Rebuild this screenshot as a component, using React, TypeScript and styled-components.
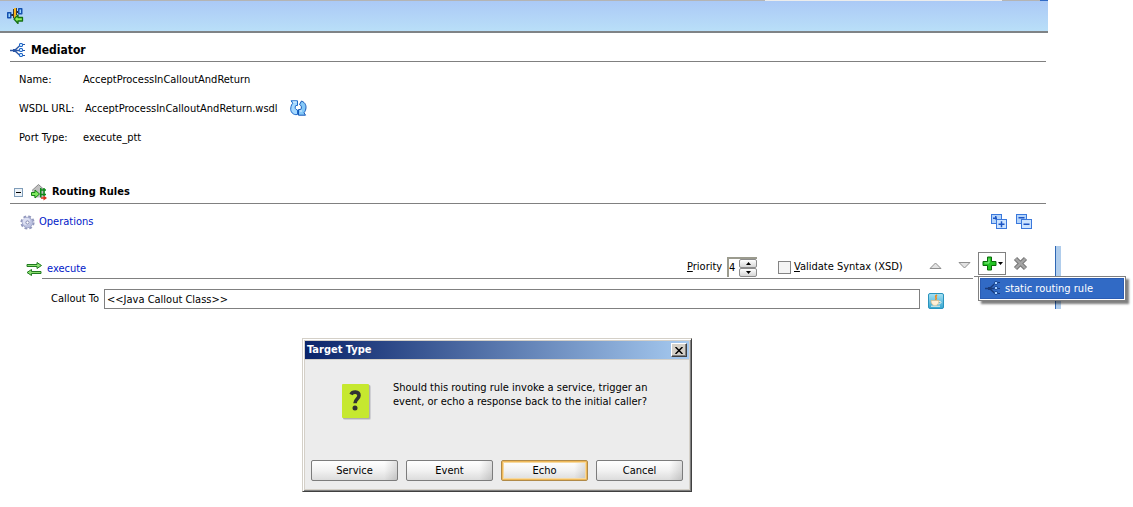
import React from "react";
import styled, { createGlobalStyle } from "styled-components";

const GlobalStyle = createGlobalStyle`
  * { box-sizing: border-box; }
  body {
    margin: 0;
    background: #fff;
    color: #000;
    font-family: "DejaVu Sans Condensed", "Noto Sans", sans-serif;
    font-size: 11px;
    line-height: 14px;
  }
  button, input {
    font: inherit;
    color: inherit;
    margin: 0;
    padding: 0;
    border-radius: 0;
  }
  svg { display: block; flex: none; }
`;

const Page = styled.div`
  padding-bottom: 15px;
`;

const WindowEdge = styled.div`
  display: flex;
  justify-content: flex-end;
  height: 1px;
  margin-right: 85px;
  background: #b4b4b4;
`;

const EdgePiece = styled.span<{ $width: number; $gap: number; $color: string }>`
  width: ${(p) => p.$width}px;
  margin-right: ${(p) => p.$gap}px;
  background: ${(p) => p.$color};
`;

const Toolbar = styled.header`
  height: 32px;
  margin-right: 85px;
  padding: 6px 7px;
  background: linear-gradient(#abc9f6, #b9dff8);
  border-bottom: 2px solid #7f8386;
`;

const IconButton = styled.button`
  display: flex;
  border: 0;
  background: none;
`;

const SectionHead = styled.div<{ $indent: number; $gap: number }>`
  display: flex;
  align-items: center;
  gap: ${(p) => p.$gap}px;
  height: 29px;
  margin: 0 87px 0 10px;
  padding: 6px 0 0 ${(p) => p.$indent}px;
  border-bottom: 1px solid #808080;
`;

const Title = styled.h1`
  margin: 0;
  font-size: 12px;
  line-height: 14px;
`;

const Subtitle = styled.h2`
  margin: 0;
  font-size: 11px;
  line-height: 14px;
`;

const Details = styled.dl`
  margin: 3px 0 23px 19px;
`;

const DetailRow = styled.div`
  display: flex;
  align-items: center;
  height: 29px;
`;

const DetailName = styled.dt`
  width: 64px;
  white-space: nowrap;
`;

const DetailValue = styled.dd<{ $inset?: boolean }>`
  display: flex;
  align-items: center;
  gap: 12px;
  margin: 0;
  padding-left: ${(p) => (p.$inset ? 2 : 0)}px;
`;

const OperationsBar = styled.div`
  display: flex;
  align-items: center;
  height: 36px;
  margin: 0 101px 6px 20px;
`;

const BarLink = styled.a`
  display: flex;
  align-items: center;
  gap: 4px;
  margin-right: auto;
  color: #0018c8;
  text-decoration: none;
`;

const StackButtons = styled.div`
  display: flex;
  gap: 9px;
`;

const CollapseButton = styled(IconButton)`
  margin-right: 4px;
`;

const RuleArea = styled.section`
  display: flex;
  margin-right: 72px;
`;

const RuleBody = styled.div`
  flex: 1;
`;

const ScrollTrack = styled.div`
  width: 6px;
  background: #b0cdec;
  border-left: 1px solid #2f67b4;
`;

const RuleHead = styled.div`
  display: flex;
  align-items: flex-end;
  height: 32px;
  padding: 0 27px 0 26px;
`;

const RuleLine = styled.hr`
  height: 1px;
  margin: 0 82px 0 42px;
  border: 0;
  background: #808080;
`;

const RuleLink = styled(BarLink)`
  gap: 5px;
  height: 18px;
`;

const Fields = styled.div`
  display: flex;
  align-items: center;
  height: 22px;
`;

const PriorityLabel = styled.label`
  width: 40px;
  white-space: nowrap;
`;

const Spinner = styled.div`
  display: flex;
  width: 30px;
  height: 20px;
  margin-right: 21px;
  border-top: 2px solid #9b9b8e;
  border-left: 2px solid #9b9b8e;
`;

const SpinnerInput = styled.input`
  width: 10px;
  border: 0;
  outline: 0;
`;

const SpinnerButtons = styled.div`
  display: flex;
  flex-direction: column;
  flex: 1;
`;

const StepButton = styled.button`
  display: flex;
  align-items: center;
  justify-content: center;
  height: 9px;
  border: 1px solid #8c8c8c;
  border-radius: 2px;
  background: linear-gradient(#fff, #d6d6d6);
`;

const CheckLabel = styled.label`
  display: flex;
  align-items: center;
  gap: 3px;
  width: 151px;
  white-space: nowrap;
`;

const CheckBox = styled.input`
  appearance: none;
  width: 13px;
  height: 13px;
  border: 1px solid #848484;
  background: #f4f4f4;
`;

const RuleTools = styled.div`
  display: flex;
  align-items: center;
  height: 23px;
  margin-bottom: 3px;
`;

const MoveButtons = styled.div`
  display: flex;
  gap: 16px;
  margin: 4px 7px 0 0;
`;

const AddHolder = styled.div`
  position: relative;
  margin-right: 7px;
`;

const AddButton = styled.button`
  display: flex;
  align-items: center;
  gap: 1px;
  width: 28px;
  height: 23px;
  padding-left: 3px;
  border: 1px solid #808080;
  background: #fff;
`;

const Menu = styled.div`
  position: absolute;
  top: 24px;
  left: 0;
  width: 148px;
  padding: 1px;
  border: 1px solid #808080;
  background: #fff;
  box-shadow: 3px 3px 2px rgba(0, 0, 0, 0.5);

  &::before {
    content: "";
    position: absolute;
    top: -1px;
    left: -5px;
    width: 5px;
    height: 1px;
    background: #808080;
  }
`;

const MenuItem = styled.button`
  display: flex;
  align-items: center;
  gap: 4px;
  width: 100%;
  height: 21px;
  padding-left: 4px;
  border: 1px solid #2a5cb4;
  background: #316ac5;
  color: #fff;
  white-space: nowrap;
`;

const CalloutRow = styled.div`
  display: flex;
  align-items: center;
  margin-top: 10px;
  padding: 0 111px 0 51px;
`;

const CalloutLabel = styled.label`
  width: 53px;
  white-space: nowrap;
`;

const CalloutInput = styled.input`
  flex: 1;
  height: 20px;
  margin-right: 8px;
  padding: 0 2px;
  border: 1px solid #808080;
  outline: 0;
`;

const CalloutButton = styled(IconButton)`
  padding-top: 3px;
`;

const Dialog = styled.div`
  width: 390px;
  margin: 29px 0 0 302px;
  padding: 1px;
  border: 1px solid;
  border-color: #d4d0c8 #404040 #404040 #d4d0c8;
  background: #d4d0c8;
  box-shadow: inset 1px 1px 0 #fff, inset -1px -1px 0 #808080;
`;

const DialogTitle = styled.div`
  display: flex;
  align-items: center;
  justify-content: space-between;
  height: 18px;
  margin: 1px;
  padding: 0 2px;
  background: linear-gradient(to right, #0a246a, #a6caf0);
  color: #fff;
  font-weight: bold;
`;

const CloseButton = styled.button`
  display: flex;
  align-items: center;
  justify-content: center;
  width: 16px;
  height: 14px;
  border: 1px solid;
  border-color: #fff #404040 #404040 #fff;
  background: #d4d0c8;
  box-shadow: inset -1px -1px 0 #808080;
`;

const DialogBody = styled.div`
  margin: 1px;
  padding: 21px 6px 8px;
  background: #ececec;
`;

const Message = styled.div`
  display: flex;
  gap: 22px;
  height: 79px;
  padding-left: 31px;
`;

const MessageText = styled.p`
  margin: 0;
  white-space: pre;
`;

const QuestionMark = styled.div`
  padding-top: 3px;
`;

const Choices = styled.div`
  display: flex;
  gap: 8px;
`;

const Choice = styled.button<{ $focused?: boolean }>`
  width: 87px;
  height: 21px;
  border: 1px solid #7c7c7c;
  border-radius: 2px;
  background: linear-gradient(to right, transparent 85%, rgba(0, 0, 0, 0.12)),
    linear-gradient(#fff, #f2f2f2 50%, #dcdcdc);
  ${(p) => p.$focused && "box-shadow: inset 0 0 0 1px #efb95a, inset 0 0 0 2px #f6d9a0; border-color: #b08a48;"}
`;

function MediatorIcon({ dark }: { dark?: boolean }) {
  const line = dark ? "#1a3c7c" : "#2a56a4";
  return (
    <svg width="16" height="15" viewBox="0 0 16 15" fill="none">
      <path d="M0 7.500H4M5 7L10 2.500M5 8L10 12.500M6 7.500H10" stroke={line} strokeWidth="1.400" />
      <path d="M13 1.500h2M13 7.500h2M13 12.500h2" stroke={line} />
      <rect x="3" y="6" width="3" height="3" fill={line} />
      <g fill={dark ? "#a8d0ff" : "#c6e6ff"} stroke={dark ? "#1f4f9e" : "#2468c8"}>
        <rect x="9.500" y="0.500" width="3" height="3" rx="0.500" />
        <rect x="9.500" y="5.500" width="3" height="3" rx="0.500" />
        <rect x="9.500" y="10.500" width="3" height="3" rx="0.500" />
      </g>
    </svg>
  );
}

function ReturnIcon() {
  return (
    <svg width="17" height="17" viewBox="0 0 17 17" strokeLinejoin="round">
      <path d="M4 8h3M9 5h3" stroke="#333" strokeWidth="2" />
      <path d="M6.500 2v9M9.500 1v7" stroke="#3c3c3c" />
      <rect x="7" y="1" width="2" height="10" fill="#f6b51e" />
      <rect x="0.750" y="5.750" width="3" height="5" fill="#9ad4ff" stroke="#1450b0" strokeWidth="1.500" />
      <rect x="11.750" y="1.750" width="3" height="5" fill="#9ad4ff" stroke="#1450b0" strokeWidth="1.500" />
      <path d="M7 12l4-4v2.500h4.500v3.500H11v2.500z" fill="#8ff05c" stroke="#157015" strokeWidth="1.300" />
    </svg>
  );
}

function RefreshIcon() {
  return (
    <svg width="17" height="17" viewBox="0 0 17 17" strokeLinejoin="round">
      <path d="M1 0.800H7.500V5.500H5.800C4.500 7.500 5 9.500 7.500 10v4.500C3 15.500 0 11.500 0.800 8C1 5.500 2 4 2.800 3.200z" fill="#a4d8ff" stroke="#1b68c8" />
      <path d="M15.500 15.200H8.500V9.500H10.700C12 7.500 11.500 5.500 9.500 4.500L11.500 1C15.500 2.500 16.500 6 15.800 9C15.500 11 14.500 12 14 12.800z" fill="#84c8f8" stroke="#1558b8" />
      <path d="M3 2h3.500M10 11h2" stroke="#e4f5ff" />
    </svg>
  );
}

function CollapseIcon() {
  return (
    <svg width="9" height="9" viewBox="0 0 9 9">
      <rect x="0.500" y="0.500" width="8" height="8" fill="#eef3f8" stroke="#7f9db9" />
      <path d="M2 4.500h5" stroke="#000" />
    </svg>
  );
}

function RoutingIcon() {
  return (
    <svg width="17" height="17" viewBox="0 0 17 17">
      <path d="M1 6.500L7.500 0.500l6.500 6v7H3z" fill="#c0c0c0" />
      <path d="M1 6.500L7.500 0.500l6.500 6" fill="none" stroke="#8a8a8a" />
      <path d="M0.500 8.500h3.500V6l4.500 4-4.500 4v-2.500H0.500z" fill="#7fe85e" stroke="#178017" />
      <path d="M9.750 4v9.500M9 6h6M9 10.500h6M13 4v8" stroke="#0f8a1c" strokeWidth="1.500" fill="none" />
      <path d="M10 14h3" stroke="#d8301c" strokeWidth="1.500" />
      <path d="M12.500 11.500l3.500 2.500-3.500 2.500z" fill="#d8301c" />
    </svg>
  );
}

function GearIcon() {
  return (
    <svg width="15" height="15" viewBox="0 0 15 15">
      <circle cx="7.500" cy="7.500" r="6" fill="none" stroke="#9298bd" strokeWidth="2.200" strokeDasharray="2.700 2.010" />
      <circle cx="7.500" cy="7.500" r="5.200" fill="#bcc2e0" stroke="#a4aacc" />
      <circle cx="6.500" cy="6.500" r="3.800" fill="#dcdff2" />
      <circle cx="7.500" cy="7.500" r="1.600" fill="#fff" stroke="#8288b0" />
    </svg>
  );
}

function ExchangeIcon() {
  return (
    <svg width="16" height="14" viewBox="0 0 16 14" strokeLinejoin="round">
      <path d="M1 2.500h10V0.500l4.500 3-4.500 3V4.500H1z" fill="#8be070" stroke="#217a21" />
      <path d="M15 9.500H5.500V7.500L1 10.500l4.500 3V11.500h9.500z" fill="#8be070" stroke="#217a21" />
    </svg>
  );
}

function StackIcon({ plus }: { plus?: boolean }) {
  return (
    <svg width="16" height="16" viewBox="0 0 16 16">
      <g stroke="#3a78dc">
        <rect x="0.500" y="0.500" width="10" height="9" fill="#b4d4fa" />
        <rect x="5.500" y="5.500" width="10" height="9" fill="#cce4ff" />
      </g>
      <path
        d={plus ? "M2 4.250h4M4.750 2v3.500M7.500 10.250h6M10.500 7.250v6" : "M2.500 3.750h6M7.500 10.250h6"}
        stroke="#1c55c4"
        strokeWidth="1.500"
      />
    </svg>
  );
}

function MoveIcon({ down }: { down?: boolean }) {
  return (
    <svg width="13" height="7" viewBox="0 0 13 7">
      <path d={down ? "M1 0.500h11L6.500 6z" : "M1 6.500h11L6.500 1z"} fill="#e2e2e2" stroke="#8e8e8e" />
    </svg>
  );
}

function PlusIcon() {
  return (
    <svg width="15" height="15" viewBox="0 0 15 15" strokeLinejoin="round">
      <path d="M5.500 1h4v4.500H14v4H9.500V14h-4V9.500H1v-4h4.500z" fill="#22c322" stroke="#0a6a0a" />
      <path d="M7 2.500v4.500H2.500" fill="none" stroke="#8bf08b" />
    </svg>
  );
}

function Caret({ up }: { up?: boolean }) {
  return (
    <svg width="5" height="3" viewBox="0 0 5 3">
      <path d={up ? "M0 3h5L2.500 0z" : "M0 0h5L2.500 3z"} fill="#000" />
    </svg>
  );
}

function DeleteIcon() {
  return (
    <svg width="15" height="15" viewBox="0 0 15 15">
      <path d="M2.500 2.500l10 10M12.500 2.500l-10 10" stroke="#747474" strokeWidth="4.500" />
      <path d="M2.800 2.800l9.400 9.400M12.200 2.800l-9.400 9.400" stroke="#a4a4a4" strokeWidth="2.500" />
    </svg>
  );
}

function JavaIcon() {
  return (
    <svg width="16" height="16" viewBox="0 0 16 16">
      <defs>
        <linearGradient id="cup" x1="0" y1="0" x2="0" y2="1">
          <stop offset="0" stopColor="#a8e2f4" />
          <stop offset="1" stopColor="#34a6d0" />
        </linearGradient>
      </defs>
      <rect x="0.500" y="0.500" width="15" height="15" rx="1.500" fill="url(#cup)" stroke="#2a93bd" />
      <path d="M9 2c-3.500 2 1 2.500-1.500 5" stroke="#f08a1c" strokeWidth="1.600" fill="none" />
      <path d="M3 7.500h8c0 3-1.500 5-4 5s-4-2-4-5z" fill="#fff0d8" stroke="#e0b070" strokeWidth="0.600" />
      <path d="M11 8.500c3-.5 2.500 2.500-.8 2.500M3 13.200h9" stroke="#fff6e6" fill="none" />
    </svg>
  );
}

function CloseIcon() {
  return (
    <svg width="8" height="7" viewBox="0 0 8 7">
      <path d="M0.500 0l7 7M7.500 0l-7 7" stroke="#000" strokeWidth="1.500" />
    </svg>
  );
}

function QuestionIcon() {
  return (
    <svg width="29" height="36" viewBox="0 0 29 36">
      <rect x="1" y="1" width="28" height="35" rx="2" fill="#d0d0d4" />
      <rect x="1" y="1" width="27" height="34" rx="1" fill="#b0b0ac" />
      <rect x="0" y="0" width="27" height="34" rx="1" fill="#c6e82f" />
      <path d="M9 10.500C10.500 7.300 17 7 17 11.500c0 3.500-4 3.500-4 7.800" fill="none" stroke="#333" strokeWidth="3.600" />
      <circle cx="13" cy="24" r="2.500" fill="#333" />
    </svg>
  );
}

const choices = ["Service", "Event", "Echo", "Cancel"];

export default function App() {
  return (
    <Page>
      <GlobalStyle />
      <WindowEdge>
        <EdgePiece $width={237} $gap={38} $color="#ececec" />
        <EdgePiece $width={8} $gap={0} $color="#316ac5" />
      </WindowEdge>
      <Toolbar>
        <IconButton aria-label="Return to composite">
          <ReturnIcon />
        </IconButton>
      </Toolbar>

      <SectionHead $indent={0} $gap={5}>
        <MediatorIcon />
        <Title>Mediator</Title>
      </SectionHead>
      <Details>
        <DetailRow>
          <DetailName>Name:</DetailName>
          <DetailValue>AcceptProcessInCalloutAndReturn</DetailValue>
        </DetailRow>
        <DetailRow>
          <DetailName>WSDL URL:</DetailName>
          <DetailValue $inset>
            AcceptProcessInCalloutAndReturn.wsdl
            <IconButton aria-label="Refresh WSDL">
              <RefreshIcon />
            </IconButton>
          </DetailValue>
        </DetailRow>
        <DetailRow>
          <DetailName>Port Type:</DetailName>
          <DetailValue>execute_ptt</DetailValue>
        </DetailRow>
      </Details>

      <SectionHead $indent={4} $gap={4}>
        <CollapseButton aria-label="Collapse routing rules">
          <CollapseIcon />
        </CollapseButton>
        <RoutingIcon />
        <Subtitle>Routing Rules</Subtitle>
      </SectionHead>
      <OperationsBar>
        <BarLink href="#operations">
          <GearIcon />
          Operations
        </BarLink>
        <StackButtons>
          <IconButton aria-label="Expand all">
            <StackIcon plus />
          </IconButton>
          <IconButton aria-label="Collapse all">
            <StackIcon />
          </IconButton>
        </StackButtons>
      </OperationsBar>

      <RuleArea>
        <RuleBody>
          <RuleHead>
            <RuleLink href="#execute">
              <ExchangeIcon />
              execute
            </RuleLink>
            <Fields>
              <PriorityLabel htmlFor="priority">
                <u>P</u>riority
              </PriorityLabel>
              <Spinner>
                <SpinnerInput id="priority" defaultValue="4" />
                <SpinnerButtons>
                  <StepButton aria-label="Increase priority">
                    <Caret up />
                  </StepButton>
                  <StepButton aria-label="Decrease priority">
                    <Caret />
                  </StepButton>
                </SpinnerButtons>
              </Spinner>
              <CheckLabel>
                <CheckBox type="checkbox" />
                <span>
                  <u>V</u>alidate Syntax (XSD)
                </span>
              </CheckLabel>
            </Fields>
            <RuleTools>
              <MoveButtons>
                <IconButton aria-label="Move up">
                  <MoveIcon />
                </IconButton>
                <IconButton aria-label="Move down">
                  <MoveIcon down />
                </IconButton>
              </MoveButtons>
              <AddHolder>
                <AddButton aria-label="Add rule" aria-haspopup="menu" aria-expanded="true">
                  <PlusIcon />
                  <Caret />
                </AddButton>
                <Menu role="menu">
                  <MenuItem role="menuitem">
                    <MediatorIcon dark />
                    static routing rule
                  </MenuItem>
                </Menu>
              </AddHolder>
              <IconButton aria-label="Delete rule">
                <DeleteIcon />
              </IconButton>
            </RuleTools>
          </RuleHead>
          <RuleLine />
          <CalloutRow>
            <CalloutLabel htmlFor="callout">Callout To</CalloutLabel>
            <CalloutInput id="callout" defaultValue="<<Java Callout Class>>" />
            <CalloutButton aria-label="Choose Java class">
              <JavaIcon />
            </CalloutButton>
          </CalloutRow>
        </RuleBody>
        <ScrollTrack />
      </RuleArea>

      <Dialog role="dialog" aria-labelledby="dialog-title">
        <DialogTitle>
          <span id="dialog-title">Target Type</span>
          <CloseButton aria-label="Close">
            <CloseIcon />
          </CloseButton>
        </DialogTitle>
        <DialogBody>
          <Message>
            <QuestionMark>
              <QuestionIcon />
            </QuestionMark>
            <MessageText>
              {"Should this routing rule invoke a service, trigger an\nevent, or echo a response back to the initial caller?"}
            </MessageText>
          </Message>
          <Choices>
            {choices.map((name) => (
              <Choice key={name} $focused={name === "Echo"}>
                {name}
              </Choice>
            ))}
          </Choices>
        </DialogBody>
      </Dialog>
    </Page>
  );
}
